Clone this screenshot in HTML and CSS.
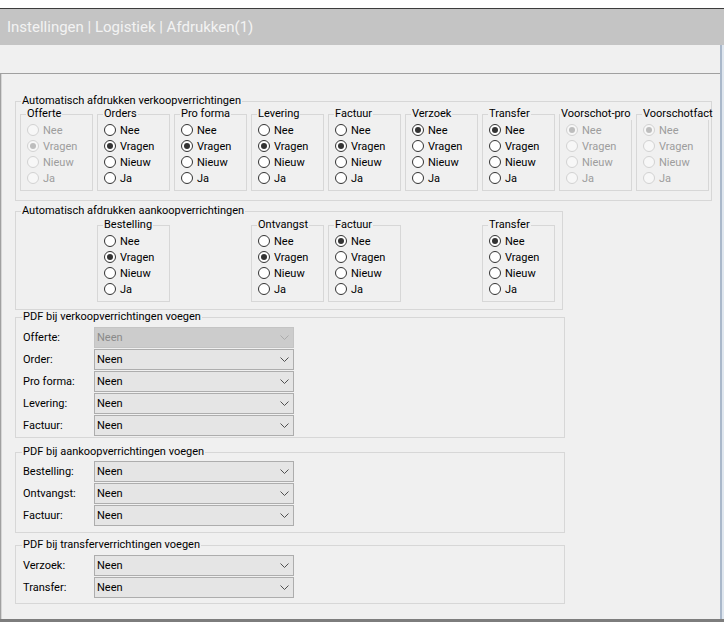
FILE: index.html
```html
<!DOCTYPE html>
<html lang="nl">
<head>
<meta charset="utf-8">
<title>Afdrukken</title>
<link rel="stylesheet" href="styles.css">
</head>
<body>
<div class="app">
  <div class="topstrip"></div>
  <div class="titlebar">Instellingen | Logistiek | Afdrukken(1)</div>
  <div class="row">
    <div class="main">
      <div class="spacer"></div>
      <div class="panel">

        <fieldset class="grp g1">
          <legend>Automatisch afdrukken verkoopverrichtingen</legend>
          <div class="cols c9">
            <fieldset class="sub dis"><legend>Offerte</legend>
              <div class="rb"><span class="dot"></span>Nee</div>
              <div class="rb"><span class="dot on"></span>Vragen</div>
              <div class="rb"><span class="dot"></span>Nieuw</div>
              <div class="rb"><span class="dot"></span>Ja</div>
            </fieldset>
            <fieldset class="sub"><legend>Orders</legend>
              <div class="rb"><span class="dot"></span>Nee</div>
              <div class="rb"><span class="dot on"></span>Vragen</div>
              <div class="rb"><span class="dot"></span>Nieuw</div>
              <div class="rb"><span class="dot"></span>Ja</div>
            </fieldset>
            <fieldset class="sub"><legend>Pro forma</legend>
              <div class="rb"><span class="dot"></span>Nee</div>
              <div class="rb"><span class="dot on"></span>Vragen</div>
              <div class="rb"><span class="dot"></span>Nieuw</div>
              <div class="rb"><span class="dot"></span>Ja</div>
            </fieldset>
            <fieldset class="sub"><legend>Levering</legend>
              <div class="rb"><span class="dot"></span>Nee</div>
              <div class="rb"><span class="dot on"></span>Vragen</div>
              <div class="rb"><span class="dot"></span>Nieuw</div>
              <div class="rb"><span class="dot"></span>Ja</div>
            </fieldset>
            <fieldset class="sub"><legend>Factuur</legend>
              <div class="rb"><span class="dot"></span>Nee</div>
              <div class="rb"><span class="dot on"></span>Vragen</div>
              <div class="rb"><span class="dot"></span>Nieuw</div>
              <div class="rb"><span class="dot"></span>Ja</div>
            </fieldset>
            <fieldset class="sub"><legend>Verzoek</legend>
              <div class="rb"><span class="dot on"></span>Nee</div>
              <div class="rb"><span class="dot"></span>Vragen</div>
              <div class="rb"><span class="dot"></span>Nieuw</div>
              <div class="rb"><span class="dot"></span>Ja</div>
            </fieldset>
            <fieldset class="sub"><legend>Transfer</legend>
              <div class="rb"><span class="dot on"></span>Nee</div>
              <div class="rb"><span class="dot"></span>Vragen</div>
              <div class="rb"><span class="dot"></span>Nieuw</div>
              <div class="rb"><span class="dot"></span>Ja</div>
            </fieldset>
            <fieldset class="sub dis"><legend class="wide">Voorschot-pro</legend>
              <div class="rb"><span class="dot on"></span>Nee</div>
              <div class="rb"><span class="dot"></span>Vragen</div>
              <div class="rb"><span class="dot"></span>Nieuw</div>
              <div class="rb"><span class="dot"></span>Ja</div>
            </fieldset>
            <fieldset class="sub dis"><legend>Voorschotfact</legend>
              <div class="rb"><span class="dot on"></span>Nee</div>
              <div class="rb"><span class="dot"></span>Vragen</div>
              <div class="rb"><span class="dot"></span>Nieuw</div>
              <div class="rb"><span class="dot"></span>Ja</div>
            </fieldset>
          </div>
        </fieldset>

        <fieldset class="grp g2">
          <legend>Automatisch afdrukken aankoopverrichtingen</legend>
          <div class="cols c7">
            <fieldset class="sub col2"><legend>Bestelling</legend>
              <div class="rb"><span class="dot"></span>Nee</div>
              <div class="rb"><span class="dot on"></span>Vragen</div>
              <div class="rb"><span class="dot"></span>Nieuw</div>
              <div class="rb"><span class="dot"></span>Ja</div>
            </fieldset>
            <fieldset class="sub col4"><legend>Ontvangst</legend>
              <div class="rb"><span class="dot"></span>Nee</div>
              <div class="rb"><span class="dot on"></span>Vragen</div>
              <div class="rb"><span class="dot"></span>Nieuw</div>
              <div class="rb"><span class="dot"></span>Ja</div>
            </fieldset>
            <fieldset class="sub col5"><legend>Factuur</legend>
              <div class="rb"><span class="dot on"></span>Nee</div>
              <div class="rb"><span class="dot"></span>Vragen</div>
              <div class="rb"><span class="dot"></span>Nieuw</div>
              <div class="rb"><span class="dot"></span>Ja</div>
            </fieldset>
            <fieldset class="sub col7"><legend>Transfer</legend>
              <div class="rb"><span class="dot on"></span>Nee</div>
              <div class="rb"><span class="dot"></span>Vragen</div>
              <div class="rb"><span class="dot"></span>Nieuw</div>
              <div class="rb"><span class="dot"></span>Ja</div>
            </fieldset>
          </div>
        </fieldset>

        <fieldset class="grp pdf g3">
          <legend>PDF bij verkoopverrichtingen voegen</legend>
          <div class="frow"><span class="lbl">Offerte:</span><div class="dd dis"><span>Neen</span><svg class="chev" width="9" height="5" viewBox="0 0 9 5"><polyline points="0.5,0.5 4.5,4.5 8.5,0.5"/></svg></div></div>
          <div class="frow"><span class="lbl">Order:</span><div class="dd"><span>Neen</span><svg class="chev" width="9" height="5" viewBox="0 0 9 5"><polyline points="0.5,0.5 4.5,4.5 8.5,0.5"/></svg></div></div>
          <div class="frow"><span class="lbl">Pro forma:</span><div class="dd"><span>Neen</span><svg class="chev" width="9" height="5" viewBox="0 0 9 5"><polyline points="0.5,0.5 4.5,4.5 8.5,0.5"/></svg></div></div>
          <div class="frow"><span class="lbl">Levering:</span><div class="dd"><span>Neen</span><svg class="chev" width="9" height="5" viewBox="0 0 9 5"><polyline points="0.5,0.5 4.5,4.5 8.5,0.5"/></svg></div></div>
          <div class="frow"><span class="lbl">Factuur:</span><div class="dd"><span>Neen</span><svg class="chev" width="9" height="5" viewBox="0 0 9 5"><polyline points="0.5,0.5 4.5,4.5 8.5,0.5"/></svg></div></div>
        </fieldset>

        <fieldset class="grp pdf g4">
          <legend>PDF bij aankoopverrichtingen voegen</legend>
          <div class="frow"><span class="lbl">Bestelling:</span><div class="dd"><span>Neen</span><svg class="chev" width="9" height="5" viewBox="0 0 9 5"><polyline points="0.5,0.5 4.5,4.5 8.5,0.5"/></svg></div></div>
          <div class="frow"><span class="lbl">Ontvangst:</span><div class="dd"><span>Neen</span><svg class="chev" width="9" height="5" viewBox="0 0 9 5"><polyline points="0.5,0.5 4.5,4.5 8.5,0.5"/></svg></div></div>
          <div class="frow"><span class="lbl">Factuur:</span><div class="dd"><span>Neen</span><svg class="chev" width="9" height="5" viewBox="0 0 9 5"><polyline points="0.5,0.5 4.5,4.5 8.5,0.5"/></svg></div></div>
        </fieldset>

        <fieldset class="grp pdf g5">
          <legend>PDF bij transferverrichtingen voegen</legend>
          <div class="frow"><span class="lbl">Verzoek:</span><div class="dd"><span>Neen</span><svg class="chev" width="9" height="5" viewBox="0 0 9 5"><polyline points="0.5,0.5 4.5,4.5 8.5,0.5"/></svg></div></div>
          <div class="frow"><span class="lbl">Transfer:</span><div class="dd"><span>Neen</span><svg class="chev" width="9" height="5" viewBox="0 0 9 5"><polyline points="0.5,0.5 4.5,4.5 8.5,0.5"/></svg></div></div>
        </fieldset>

      </div>
    </div>
    <div class="edge"></div>
  </div>
  <div class="bottom"></div>
</div>
</body>
</html>
```

FILE: styles.css
```css
* { box-sizing: border-box; }

html, body {
  margin: 0;
  padding: 0;
}

body {
  width: 724px;
  height: 622px;
  overflow: hidden;
  background: #ffffff;
  font-family: Roboto, "Segoe UI", "Open Sans", sans-serif;
  font-size: 11px;
  color: #000000;
}

.app {
  display: flex;
  flex-direction: column;
  height: 622px;
}

.topstrip {
  height: 9px;
  background: #ffffff;
  border-bottom: 1px solid #3c3c3c;
}

.titlebar {
  height: 36px;
  line-height: 36px;
  padding-left: 7px;
  background: #c4c4c4;
  color: #f3f3f3;
  font-size: 15px;
  white-space: nowrap;
}

.row {
  flex: 1;
  display: flex;
  min-height: 0;
}

.main {
  flex: 1;
  display: flex;
  flex-direction: column;
  background: #f0f0f0;
}

.edge {
  width: 4px;
  background: linear-gradient(to right, #aab8ca 0, #aab8ca 2px, #dfe6ee 2px);
}

.spacer {
  height: 28px;
}

.panel {
  flex: 1;
  border-top: 1px solid #a0a0a0;
  border-left: 1px solid #a0a0a0;
  box-shadow: inset 1px 0 0 #d6d6d6;
  padding: 20px 0 0 14px;
}

.bottom {
  height: 3px;
  background: #7d7d7d;
}

/* group boxes */
.grp {
  margin: 0;
  min-width: 0;
  border: 1px solid #d7d7d7;
  padding: 0 2px 9px 4px;
}

.grp > legend {
  padding: 0 1px;
  margin-left: 1px;
  line-height: 14px;
  white-space: nowrap;
}

.g1 {
  width: 697px;
}

.g2 {
  width: 548px;
  margin-top: 3px;
  padding-top: 1px;
  padding-bottom: 7px;
}

.cols {
  display: grid;
  column-gap: 4px;
}

.c9 { grid-template-columns: repeat(9, 73px); }
.c7 { grid-template-columns: repeat(7, 73px); }

.col2 { grid-column: 2; }
.col4 { grid-column: 4; }
.col5 { grid-column: 5; }
.col7 { grid-column: 7; }

.sub {
  margin: 0;
  min-width: 0;
  border: 1px solid #d7d7d7;
  padding: 2px 1px 4px 5px;
}

.sub > legend {
  padding: 0 1px;
  margin-left: 0;
  line-height: 12px;
  white-space: nowrap;
}

.sub > legend.wide {
  margin-left: -5px;
}

.rb {
  display: flex;
  align-items: center;
  gap: 4px;
  height: 16px;
  padding-left: 1px;
  white-space: nowrap;
}

.dot {
  width: 12px;
  height: 12px;
  flex: none;
  border: 1px solid #333333;
  border-radius: 50%;
  background: #ffffff;
  display: flex;
  align-items: center;
  justify-content: center;
}

.dot.on::after {
  content: "";
  width: 6px;
  height: 6px;
  border-radius: 50%;
  background: #333333;
}

.dis .rb { color: #9d9d9d; }
.dis .dot { border-color: #d2d2d2; background: #f7f7f7; }
.dis .dot.on::after { background: #bdbdbd; }

/* PDF groups */
.pdf {
  width: 550px;
  padding: 3px 2px 1px 7px;
}

.pdf > legend {
  margin-left: -1px;
}

.g4 {
  margin-top: 7px;
  padding-top: 2px;
  padding-bottom: 6px;
}

.g5 {
  margin-top: 5px;
  padding-top: 3px;
  padding-bottom: 5px;
}

.frow {
  display: flex;
  align-items: center;
  height: 21px;
  margin-bottom: 1px;
}

.frow:last-child {
  margin-bottom: 0;
}

.lbl {
  width: 71px;
  flex: none;
}

.dd {
  width: 200px;
  height: 21px;
  border: 1px solid #adadad;
  background: #e5e5e5;
  display: flex;
  align-items: center;
  justify-content: space-between;
  padding: 0 4px 0 2px;
}

.chev polyline {
  fill: none;
  stroke: #505050;
  stroke-width: 1;
}

.dd.dis {
  background: #cccccc;
  border-color: #c4c4c4;
  color: #8a8a8a;
}

.dd.dis .chev polyline {
  stroke: #ababab;
}
```
